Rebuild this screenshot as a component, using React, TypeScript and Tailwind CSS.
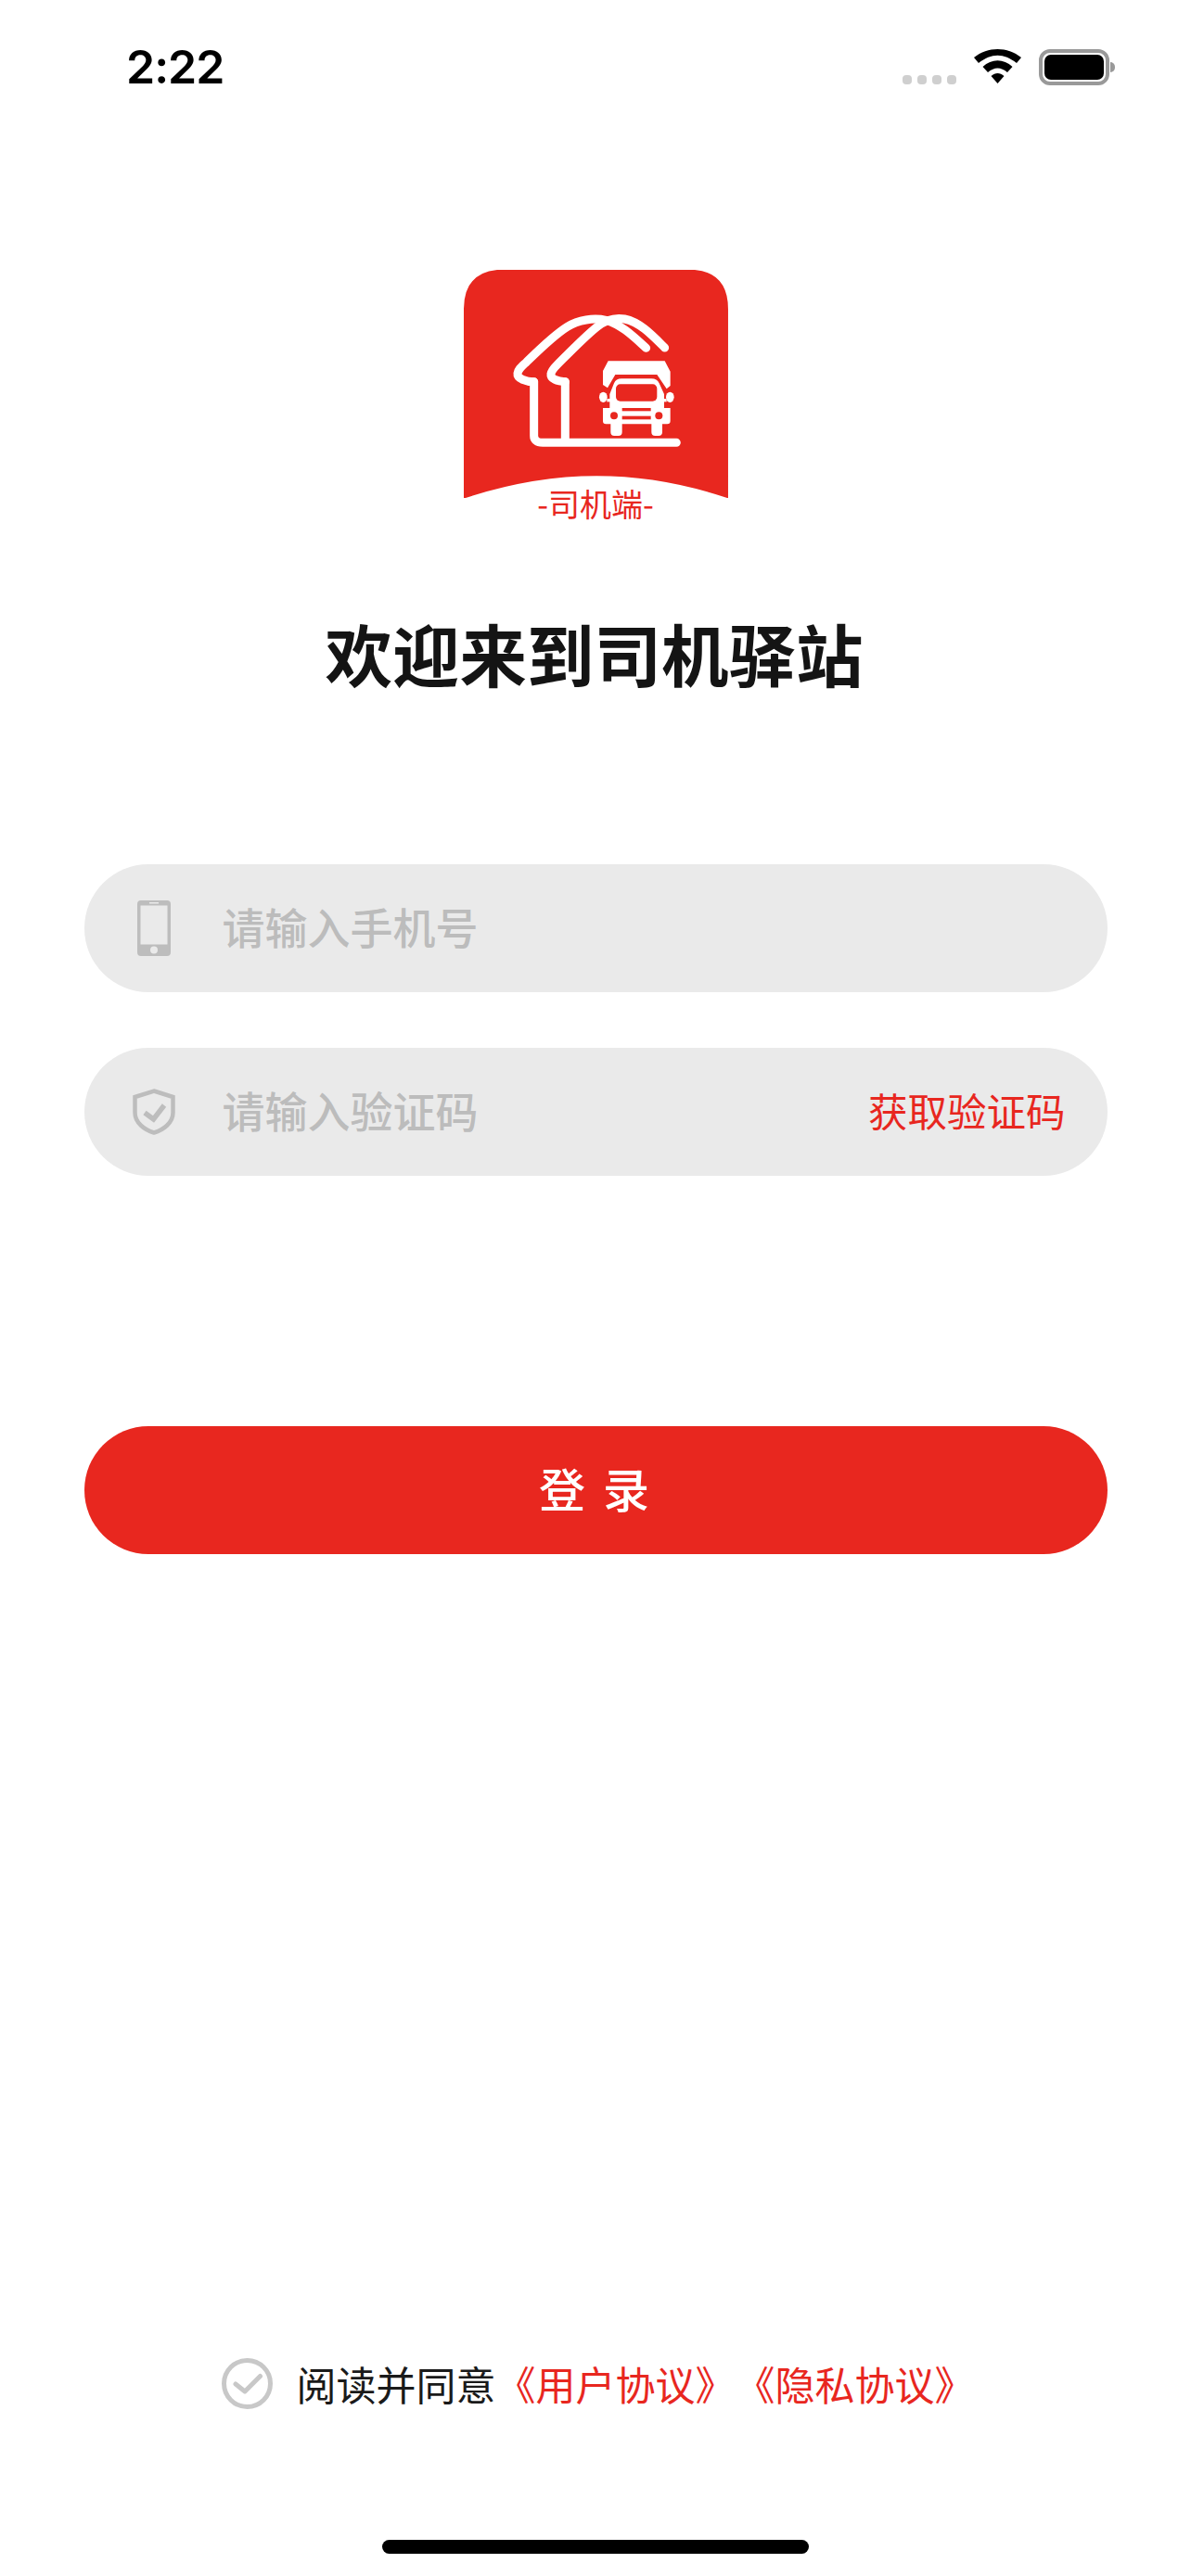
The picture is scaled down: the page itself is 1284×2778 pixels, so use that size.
const RED = '#e8271f';

function StatusBar() {
  return (
    <div className="flex h-[132px] w-full items-start justify-between pl-[136px] pr-[82px] pt-[52px]">
      <span className="font-['Inter',sans-serif] text-[50px] leading-[40px] font-semibold tracking-[-1px] text-black">2:22</span>
      <div className="mt-px flex items-end gap-[19px]">
        <div className="mb-px flex gap-[6px]">
          {[0, 1, 2, 3].map((i) => (
            <span key={i} className="h-[10px] w-[10px] rounded-[4px] bg-[#cfcfcf]" />
          ))}
        </div>
        <svg width="51" height="38" viewBox="0 0 51 38" className="mb-px">
          <path d="M0 9C15-3 36-3 51 9L46 15C32 4 19 4 5 15Z" fill="#000" />
          <path d="M9.5 19C19 10 32 10 41.5 19L36 25C29 19 22 19 15 25Z" fill="#000" />
          <path d="M18.5 29C23 25 28 25 32.5 29L25.5 37Z" fill="#000" />
        </svg>
        <div className="flex items-center gap-px">
          <div className="h-[39px] w-[76px] rounded-[12px] border-[4px] border-[#999999] p-[2px]">
            <div className="h-full w-full rounded-[7px] bg-black" />
          </div>
          <span className="h-[11px] w-[5px] rounded-r-full bg-[#999999]" />
        </div>
      </div>
    </div>
  );
}

function Logo() {
  return (
    <div className="relative mt-[159px] h-[246px] w-[285px]">
      <svg width="285" height="246" viewBox="500 291 285 246">
        <g transform="translate(480 270) scale(0.3333)">
          <path d="M60 190Q60 62 190 62H785Q915 62 915 190V802Q700 730 490 730Q280 730 60 803Z" fill={RED} />
          <g fill="none" stroke="#fff" strokeWidth="27" strokeLinecap="round" strokeLinejoin="round">
            <path d="M287 425C262 425 232 415 234 398C236 385 245 378 262 362C300 325 350 275 395 247C430 225 480 217 520 226C570 240 610 280 650 316" />
            <path d="M388 425C362 425 340 415 342 400C344 388 352 380 362 370C400 332 450 280 490 248C515 228 545 216 580 222C630 232 670 275 710 315" />
            <path d="M287 425V600C287 612 295 622 315 622H748" />
            <path d="M388 425V612" />
          </g>
        </g>
        <g transform="translate(640 380) scale(0.3333)" fill="#fff">
          <path d="M30 60L47 28H230L248 62V108L236 118L205 72H70L45 115L30 105Z" />
          <path d="M52 135L66 100Q72 85 90 85H187Q205 85 212 100L228 135V180H248V222Q248 232 238 232H222V258Q222 270 210 270H199Q187 270 187 258V232H92V258Q92 270 80 270H67Q55 270 55 258V232H40Q30 232 30 222V180H52Z" />
          <ellipse cx="31" cy="145" rx="13" ry="17" />
          <ellipse cx="247" cy="145" rx="13" ry="17" />
          <rect x="43" y="150" width="12" height="10" />
          <rect x="224" y="150" width="12" height="10" />
          <g fill={RED}>
            <rect x="72" y="103" width="133" height="55" rx="14" />
            <circle cx="66" cy="205" r="12" />
            <circle cx="211" cy="205" r="12" />
            <rect x="92" y="180" width="93" height="10" />
            <rect x="92" y="206" width="93" height="11" />
          </g>
        </g>
      </svg>
      <span className="absolute left-0 right-0 top-[232px] text-center text-[34px] leading-[40px] text-[#e8271f]">-司机端-</span>
    </div>
  );
}

function PhoneIcon() {
  return (
    <svg width="36" height="60" viewBox="0 0 36 60">
      <path
        fillRule="evenodd"
        d="M4 0H32Q36 0 36 4V56Q36 60 32 60H4Q0 60 0 56V4Q0 0 4 0ZM3.5 5.5V47.5H32.5V5.5ZM13 2V3.5H23V2ZM18 49.5A4 4 0 1 0 18 57.5A4 4 0 1 0 18 49.5Z"
        fill="#bdbdbd"
      />
    </svg>
  );
}

function ShieldIcon() {
  return (
    <svg width="46" height="50" viewBox="0 0 46 50" fill="none" stroke="#bdbdbd" strokeWidth="4.5">
      <path d="M23 2.5L43.5 9V26C43.5 37 33 44.5 23 47.5C13 44.5 2.5 37 2.5 26V9Z" />
      <path d="M13 26L22.5 33L34 18" strokeWidth="5.5" />
    </svg>
  );
}

function Field({ icon, placeholder, action }: { icon: React.ReactNode; placeholder: string; action?: string }) {
  return (
    <div className="flex h-[138px] w-[1103px] items-center rounded-full bg-[#eaeaea] pl-[50px] pr-[45px]">
      <div className="flex w-[50px] justify-center">{icon}</div>
      <span className="mb-[6px] ml-[49px] flex-1 text-[46px] leading-[60px] font-medium text-[#bcbcbc]">{placeholder}</span>
      {action && <span className="mb-[5px] text-[42.5px] leading-[60px] text-[#e8271f]">{action}</span>}
    </div>
  );
}

export default function App() {
  return (
    <div className="flex h-[2778px] w-full flex-col items-center overflow-hidden bg-white font-['Noto_Sans_CJK_SC',sans-serif]">
      <StatusBar />
      <Logo />
      <h1 className="mt-[117px] pr-[3px] text-[72.5px] leading-[100px] font-semibold text-[#141414]">欢迎来到司机驿站</h1>
      <div className="mt-[178px] flex flex-col gap-[60px]">
        <Field icon={<PhoneIcon />} placeholder="请输入手机号" />
        <Field icon={<ShieldIcon />} placeholder="请输入验证码" action="获取验证码" />
      </div>
      <button className="mt-[270px] flex h-[138px] w-[1103px] items-center justify-center rounded-full bg-[#e8271f] pb-[6px] pl-[16px] text-[50px] font-medium tracking-[19px] text-white">
        登录
      </button>
      <div className="ml-[5px] mt-auto flex h-[60px] items-center gap-[26px]">
        <svg width="55" height="55" viewBox="0 0 55 55" fill="none" stroke="#c8c8c8" strokeWidth="5">
          <circle cx="27.5" cy="27.5" r="25" />
          <path d="M15 28L25 36L41.5 19.5" strokeLinecap="round" strokeLinejoin="round" />
        </svg>
        <p className="text-[43px] leading-[60px] text-[#1a1a1a] [text-spacing-trim:space-all]">
          阅读并同意<span className="text-[#e8271f]">《用户协议》《隐私协议》</span>
        </p>
      </div>
      <div className="mb-[24px] mt-[139px] h-[15px] w-[460px] rounded-full bg-black" />
    </div>
  );
}
